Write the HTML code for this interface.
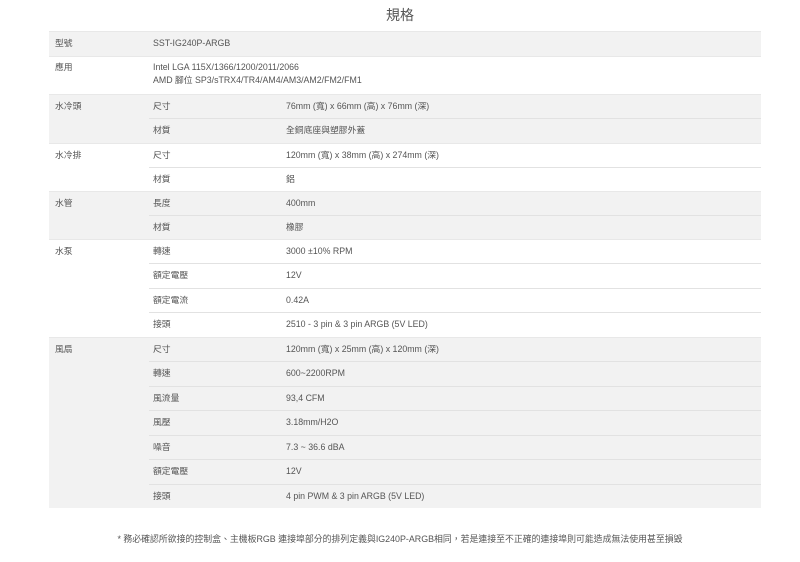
<!DOCTYPE html>
<html><head><meta charset="utf-8"><style>
body{margin:0;width:800px;height:562px;background:#fff;position:relative;overflow:hidden;font-family:"Liberation Sans","Noto Sans CJK TC",sans-serif;font-size:8.8px;color:#555}
.t{position:absolute;left:0;width:800px;top:5px;text-align:center;font-size:14px;color:#555}
.g{position:absolute;left:49px;width:712px;border-top:1px solid #e8e8e8}
.gray{background:#f2f2f2}
.tx{position:absolute;line-height:13px;white-space:nowrap}
.ln{position:absolute;left:149px;width:612px;border-top:1px solid #e2e2e2}
.f{position:absolute;left:0;width:800px;top:532px;text-align:center;font-size:8.9px;color:#555}
</style></head><body>
<div class="t">規格</div>

<div class="g gray" style="top:31px;height:25px"></div>
<div class="tx" style="left:55px;top:37px">型號</div>
<div class="tx" style="left:153px;top:37px">SST-IG240P-ARGB</div>

<div class="g" style="top:56px;height:38px"></div>
<div class="tx" style="left:55px;top:61px">應用</div>
<div class="tx" style="left:153px;top:61px">Intel LGA 115X/1366/1200/2011/2066<br>AMD 腳位 SP3/sTRX4/TR4/AM4/AM3/AM2/FM2/FM1</div>

<div class="g gray" style="top:94px;height:49px"></div>
<div class="g" style="top:143px;height:48px"></div>
<div class="g gray" style="top:191px;height:48px"></div>
<div class="g" style="top:239px;height:98px"></div>
<div class="g gray" style="top:337px;height:170px"></div>

<div class="tx" style="left:55px;top:100px">水冷頭</div>
<div class="tx" style="left:55px;top:149px">水冷排</div>
<div class="tx" style="left:55px;top:197px">水管</div>
<div class="tx" style="left:55px;top:245px">水泵</div>
<div class="tx" style="left:55px;top:343px">風扇</div>

<div class="ln" style="top:118px"></div>
<div class="ln" style="top:167px"></div>
<div class="ln" style="top:215px"></div>
<div class="ln" style="top:263px"></div>
<div class="ln" style="top:288px"></div>
<div class="ln" style="top:312px"></div>
<div class="ln" style="top:361px"></div>
<div class="ln" style="top:386px"></div>
<div class="ln" style="top:410px"></div>
<div class="ln" style="top:435px"></div>
<div class="ln" style="top:459px"></div>
<div class="ln" style="top:484px"></div>

<div class="tx" style="left:153px;top:100px">尺寸</div><div class="tx" style="left:286px;top:100px">76mm (寬) x 66mm (高) x 76mm (深)</div>
<div class="tx" style="left:153px;top:124px">材質</div><div class="tx" style="left:286px;top:124px">全銅底座與塑膠外蓋</div>
<div class="tx" style="left:153px;top:149px">尺寸</div><div class="tx" style="left:286px;top:149px">120mm (寬) x 38mm (高) x 274mm (深)</div>
<div class="tx" style="left:153px;top:173px">材質</div><div class="tx" style="left:286px;top:173px">鋁</div>
<div class="tx" style="left:153px;top:197px">長度</div><div class="tx" style="left:286px;top:197px">400mm</div>
<div class="tx" style="left:153px;top:221px">材質</div><div class="tx" style="left:286px;top:221px">橡膠</div>
<div class="tx" style="left:153px;top:245px">轉速</div><div class="tx" style="left:286px;top:245px">3000 ±10% RPM</div>
<div class="tx" style="left:153px;top:269px">額定電壓</div><div class="tx" style="left:286px;top:269px">12V</div>
<div class="tx" style="left:153px;top:294px">額定電流</div><div class="tx" style="left:286px;top:294px">0.42A</div>
<div class="tx" style="left:153px;top:318px">接頭</div><div class="tx" style="left:286px;top:318px">2510 - 3 pin &amp; 3 pin ARGB (5V LED)</div>
<div class="tx" style="left:153px;top:343px">尺寸</div><div class="tx" style="left:286px;top:343px">120mm (寬) x 25mm (高) x 120mm (深)</div>
<div class="tx" style="left:153px;top:367px">轉速</div><div class="tx" style="left:286px;top:367px">600~2200RPM</div>
<div class="tx" style="left:153px;top:392px">風流量</div><div class="tx" style="left:286px;top:392px">93,4 CFM</div>
<div class="tx" style="left:153px;top:416px">風壓</div><div class="tx" style="left:286px;top:416px">3.18mm/H2O</div>
<div class="tx" style="left:153px;top:441px">噪音</div><div class="tx" style="left:286px;top:441px">7.3 ~ 36.6 dBA</div>
<div class="tx" style="left:153px;top:465px">額定電壓</div><div class="tx" style="left:286px;top:465px">12V</div>
<div class="tx" style="left:153px;top:490px">接頭</div><div class="tx" style="left:286px;top:490px">4 pin PWM &amp; 3 pin ARGB (5V LED)</div>

<div class="f">* 務必確認所欲接的控制盒、主機板RGB 連接埠部分的排列定義與IG240P-ARGB相同，若是連接至不正確的連接埠則可能造成無法使用甚至損毀</div>
</body></html>
